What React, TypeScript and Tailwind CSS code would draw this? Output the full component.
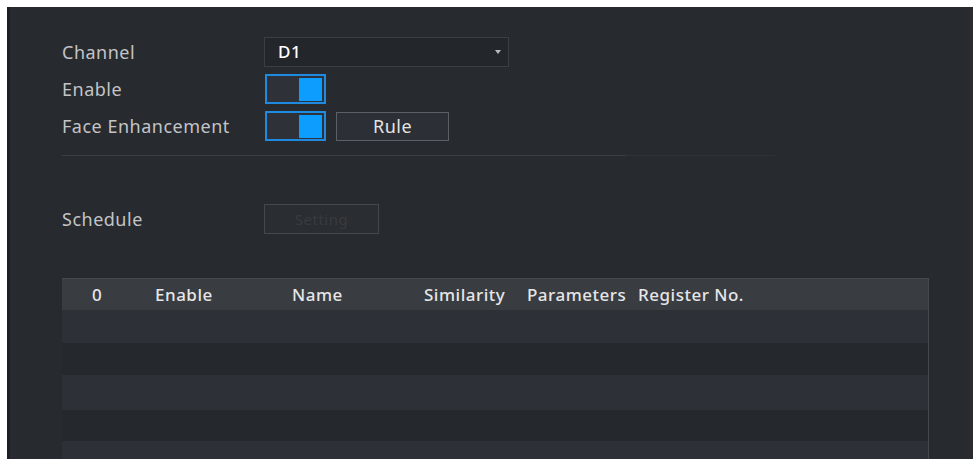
import React from "react";

const font = { fontFamily: '"Noto Sans", "Open Sans", sans-serif' };

const Toggle = ({ on }: { on: boolean }) => (
  <div className="w-[61px] h-[30px] border-2 border-[#1f8be0] bg-[#2e3137] flex items-center justify-end px-[2px]">
    {on && <div className="w-[23px] h-[23px] bg-[#0d9dff]" />}
  </div>
);

const columns = [
  { label: "0", w: "w-[93px] pl-[30px]" },
  { label: "Enable", w: "w-[137px]" },
  { label: "Name", w: "w-[132px]" },
  { label: "Similarity", w: "w-[103px]" },
  { label: "Parameters", w: "w-[111px]" },
  { label: "Register No.", w: "flex-1" },
];

const rows = [
  "h-[33px] bg-[#2d3037]",
  "h-[32px] bg-[#25282c]",
  "h-[35px] bg-[#2d3037]",
  "h-[31px] bg-[#25282c]",
  "h-[32px] bg-[#2d3037]",
];

export default function App() {
  return (
    <div className="w-[973px] h-[459px] bg-white pt-[7px] pl-[7px] overflow-hidden" style={font}>
      <div className="h-full flex bg-[#272a2f] border-l-[3px] border-[#1d1f22]">
        <div className="flex-1 pl-[52px] pt-[30px] text-[18px] text-[#c3c4c6] tracking-[0.5px]">
          {/* channel */}
          <div className="flex items-center h-[30px]">
            <span className="w-[202px]">Channel</span>
            <div className="w-[245px] h-[30px] bg-[#23262a] border border-[#3b3e43] flex items-center justify-between pl-[13px] pr-[7px]">
              <span className="text-white font-medium text-[17px]">D1</span>
              <span className="w-0 h-0 border-l-[3px] border-r-[3px] border-t-[4px] border-l-transparent border-r-transparent border-t-[#b9babd]" />
            </div>
          </div>

          <div className="flex items-center h-[30px] mt-[7px]">
            <span className="w-[203px]">Enable</span>
            <Toggle on />
          </div>

          <div className="flex items-center h-[30px] mt-[7px]">
            <span className="w-[203px]">Face Enhancement</span>
            <Toggle on />
            <button className="ml-[10px] w-[113px] h-[29px] border border-[#5c5f65] bg-[#2c2f35] text-[#e2e3e4] text-[18px]">
              Rule
            </button>
          </div>

          {/* divider */}
          <div className="flex mt-[14px] w-[713px]">
            <div className="w-[563px] border-t border-[#3c3f44]" />
            <div className="w-[150px] border-t border-[#2f3237]" />
          </div>

          {/* schedule */}
          <div className="flex items-center h-[30px] mt-[48px]">
            <span className="w-[202px]">Schedule</span>
            <button className="w-[115px] h-[30px] border border-[#44474c] bg-[#2a2d32] text-[#383b40] text-[15px]">
              Setting
            </button>
          </div>

          {/* face database list */}
          <div className="mt-[44px] w-[867px] border-t border-r border-[#45484d]">
            <div className="flex items-center h-[31px] bg-[#393c41] text-[#e6e6e7] font-medium text-[17px]">
              {columns.map((c) => (
                <span key={c.label} className={c.w}>
                  {c.label}
                </span>
              ))}
            </div>
            {rows.map((r, i) => (
              <div key={i} className={r} />
            ))}
          </div>
        </div>
        <div className="w-[5px] bg-[#2b2a2e]" />
      </div>
    </div>
  );
}
